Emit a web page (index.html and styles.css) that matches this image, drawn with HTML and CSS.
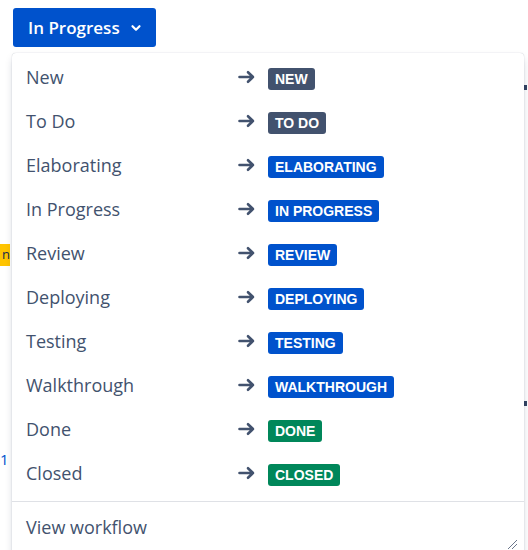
FILE: index.html
```html
<!DOCTYPE html>
<html lang="en">
<head>
    <meta charset="UTF-8">
    <title>Status transitions</title>
    <link rel="stylesheet" href="styles.css">
</head>
<body>

    <div class="page">
        <button class="status-btn">In Progress
            <svg width="12" height="12" viewBox="0 0 12 12"><path d="M2.5 4.2 6 7.7 9.5 4.2" fill="none" stroke="#fff" stroke-width="2.2" stroke-linecap="round" stroke-linejoin="round"/></svg>
        </button>

        <!-- page content behind the menu -->
        <div class="behind">
            <span class="tag-yellow">n</span>
            <span class="link-num">1</span>
            <span class="mark mark-top"></span>
            <span class="mark mark-bottom"></span>
        </div>

        <div class="menu">
            <div class="menu-list" id="transitions">
                <!-- JS builds rows -->
            </div>
            <div class="menu-sep"></div>
            <div class="menu-foot">View workflow</div>
            <svg class="grip" width="12" height="12" viewBox="0 0 12 12"><path d="M2 11 11 2M6 11 11 6" stroke="#6b778c" stroke-width="1"/></svg>
        </div>
    </div>

    <script>
        const transitions = [
            ["New", "NEW", "grey"],
            ["To Do", "TO DO", "grey"],
            ["Elaborating", "ELABORATING", "blue"],
            ["In Progress", "IN PROGRESS", "blue"],
            ["Review", "REVIEW", "blue"],
            ["Deploying", "DEPLOYING", "blue"],
            ["Testing", "TESTING", "blue"],
            ["Walkthrough", "WALKTHROUGH", "blue"],
            ["Done", "DONE", "green"],
            ["Closed", "CLOSED", "green"]
        ];

        const arrow = '<svg width="18" height="14" viewBox="0 0 18 14"><path d="M1.5 7H15M10 2.2 15 7 10 11.8" fill="none" stroke="#42526e" stroke-width="2.6" stroke-linecap="round" stroke-linejoin="round"/></svg>';

        const list = document.getElementById("transitions");
        transitions.forEach(t => {
            const row = document.createElement("div");
            row.className = "menu-row";
            row.innerHTML = `
                <span class="row-name">${t[0]}</span>
                <span class="row-arrow">${arrow}</span>
                <span><span class="lozenge ${t[2]}">${t[1]}</span></span>
            `;
            list.appendChild(row);
        });
    </script>

</body>
</html>
```

FILE: styles.css
```css
html, body {
    margin: 0;
    height: 100%;
    overflow: hidden;
    background: #fff;
}
body {
    font-family: "Open Sans", "Noto Sans", sans-serif;
    color: #42526e;
}
.page {
    position: relative;
    height: 550px;
}
.status-btn {
    position: absolute;
    left: 13px;
    top: 8px;
    height: 39px;
    padding: 0 14px 0 15px;
    display: flex;
    align-items: center;
    gap: 10px;
    background-color: #0052cc;
    color: #fff;
    border: none;
    border-radius: 3px;
    font-family: "Open Sans", "Noto Sans", sans-serif;
    font-size: 17px;
    font-weight: 600;
    cursor: pointer;
}
.tag-yellow {
    position: absolute;
    left: 0;
    top: 244px;
    width: 10px;
    height: 22px;
    background: #ffc400;
    font-size: 13px;
    line-height: 21px;
    color: #172b4d;
    text-align: right;
}
.link-num {
    position: absolute;
    left: 0;
    top: 449px;
    font-size: 15px;
    color: #0052cc;
}
.mark {
    position: absolute;
    left: 524px;
    width: 3px;
    height: 5px;
    background: #344563;
}
.mark-top { top: 85px; }
.mark-bottom { top: 401px; }

.menu {
    position: absolute;
    left: 12px;
    top: 53px;
    width: 512px;
    height: 510px;
    background: #fff;
    border-radius: 4px;
    box-shadow: 0 0 1px rgba(9, 30, 66, 0.31), 0 4px 8px -2px rgba(9, 30, 66, 0.25);
}
.menu-list {
    padding-top: 2px;
    padding-bottom: 6px;
}
.menu-row {
    display: grid;
    grid-template-columns: 212px 30px auto;
    align-items: center;
    height: 44px;
    padding-left: 14px;
    font-size: 18px;
}
.row-arrow {
    display: flex;
    align-items: center;
}
.lozenge {
    display: inline-block;
    padding: 0 7px;
    height: 22px;
    line-height: 22px;
    border-radius: 3px;
    color: #fff;
    font-family: "Liberation Sans", Arial, sans-serif;
    font-size: 14px;
    font-weight: bold;
}
.grey { background-color: #42526e; }
.blue { background-color: #0052cc; }
.green { background-color: #00875a; }
.menu-sep {
    height: 1px;
    background: #dfe1e6;
}
.menu-foot {
    padding-left: 14px;
    height: 50px;
    line-height: 50px;
    font-size: 18px;
}
.grip {
    position: absolute;
    left: 494px;
    top: 485px;
}
```
